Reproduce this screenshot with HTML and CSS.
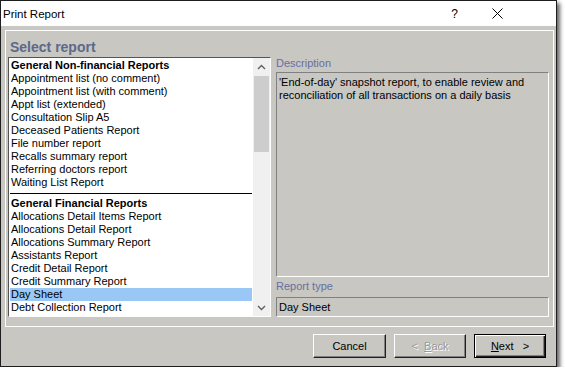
FILE: index.html
```html
<!doctype html>
<html lang="en">
<head>
    <meta charset="UTF-8">
    <title>Print Report</title>
    <link rel="stylesheet" href="styles.css">
</head>
<body>

<div class="window">
    <div class="titlebar">
        <span class="title">Print Report</span>
        <span class="tb-btn">?</span>
        <span class="tb-btn">
            <svg width="11" height="11" viewBox="0 0 11 11"><path d="M0.5 0.5 L10.5 10.5 M10.5 0.5 L0.5 10.5" stroke="#000" stroke-width="1" fill="none"/></svg>
        </span>
    </div>

    <div class="body">
        <div class="group">
            <h2 class="group-title">Select report</h2>
            <div class="group-row">
                <div class="listbox">
                    <ul class="list">
                        <li class="head">General Non-financial Reports</li>
                        <li>Appointment list (no comment)</li>
                        <li>Appointment list (with comment)</li>
                        <li>Appt list (extended)</li>
                        <li>Consultation Slip A5</li>
                        <li>Deceased Patients Report</li>
                        <li>File number report</li>
                        <li>Recalls summary report</li>
                        <li>Referring doctors report</li>
                        <li>Waiting List Report</li>
                        <li class="sep"></li>
                        <li class="head">General Financial Reports</li>
                        <li>Allocations Detail Items Report</li>
                        <li>Allocations Detail Report</li>
                        <li>Allocations Summary Report</li>
                        <li>Assistants Report</li>
                        <li>Credit Detail Report</li>
                        <li>Credit Summary Report</li>
                        <li class="selected">Day Sheet</li>
                        <li>Debt Collection Report</li>
                        <li>Debtors Age Analysis</li>
                    </ul>
                    <div class="scrollbar">
                        <span class="arrow">
                            <svg width="9" height="6" viewBox="0 0 9 6"><path d="M1 5 L4.5 1.5 L8 5" stroke="#606060" stroke-width="1.4" fill="none"/></svg>
                        </span>
                        <span class="track"><span class="thumb"></span></span>
                        <span class="arrow">
                            <svg width="9" height="6" viewBox="0 0 9 6"><path d="M1 1 L4.5 4.5 L8 1" stroke="#606060" stroke-width="1.4" fill="none"/></svg>
                        </span>
                    </div>
                </div>

                <div class="details">
                    <div class="field-label">Description</div>
                    <div class="field desc">'End-of-day' snapshot report, to enable review and reconciliation of all transactions on a daily basis</div>
                    <div class="field-label type-label">Report type</div>
                    <div class="field type">Day Sheet</div>
                </div>
            </div>
        </div>

        <div class="footer">
            <button class="btn">Cancel</button>
            <button class="btn" disabled>&lt;&nbsp; <u>B</u>ack</button>
            <button class="btn default"><u>N</u>ext&nbsp;&nbsp; &gt;</button>
        </div>
    </div>
</div>

</body>
</html>
```

FILE: styles.css
```css
* {
    margin: 0;
    padding: 0;
    list-style: none;
    box-sizing: border-box;
}
body {
    background: #fff;
    font-family: "Liberation Sans", Arial, sans-serif;
    font-size: 11px;
    color: #000;
}
.window {
    width: 557px;
    height: 367px;
    border: 1px solid #1e1e1e;
    background: #c8c7c2;
    display: flex;
    flex-direction: column;
    box-shadow: 3px 3px 4px rgba(0,0,0,0.6);
}
/* title bar */
.titlebar {
    height: 25px;
    background: #fff;
    display: flex;
    align-items: center;
    padding-right: 37px;
}
.titlebar .title {
    flex: 1;
    padding-left: 2px;
    font-size: 11.5px;
}
.tb-btn {
    width: 43px;
    display: flex;
    justify-content: center;
    align-items: center;
    font-size: 12px;
}
/* main area */
.body {
    flex: 1;
    padding: 4px 2px 0 4px;
    display: flex;
    flex-direction: column;
}
.group {
    height: 297px;
    border: 1px solid #fff;
    padding: 8px 4px 0 2px;
}
.group-title {
    font-size: 14px;
    font-weight: bold;
    line-height: 16px;
    color: #5c6989;
    padding-left: 2px;
    margin-bottom: 2px;
}
.group-row {
    display: flex;
    align-items: flex-start;
    gap: 5px;
}
/* list box */
.listbox {
    width: 263px;
    height: 260px;
    display: flex;
    background: #fff;
    border: 1px solid;
    border-color: #555 #fff #fff #555;
}
.list {
    flex: 1;
    padding-top: 1px;
    overflow: hidden;
}
.list li {
    height: 13px;
    line-height: 13px;
    margin: 0 1px;
    padding-left: 1px;
    white-space: nowrap;
}
.list li.head {
    font-weight: bold;
}
.list li.sep {
    padding: 0;
    border-top: 1px solid #000;
    margin-top: 4px;
    height: 4px;
}
.list li.selected {
    background: #99c8f6;
}
.scrollbar {
    width: 17px;
    background: #f0f0f0;
    display: flex;
    flex-direction: column;
}
.scrollbar .arrow {
    height: 17px;
    display: flex;
    justify-content: center;
    align-items: center;
}
.scrollbar .track {
    flex: 1;
    padding: 1px 1px 0;
}
.scrollbar .thumb {
    display: block;
    height: 76px;
    background: #cdcdcd;
}
/* description side */
.details {
    flex: 1;
    display: flex;
    flex-direction: column;
}
.field-label {
    line-height: 13px;
    color: #6670a0;
    margin-bottom: 2px;
}
.type-label {
    margin-top: 3px;
    margin-bottom: 4px;
}
.field {
    border: 1px solid;
    border-color: #808080 #fff #fff #808080;
    padding-left: 2px;
}
.desc {
    height: 205px;
    padding-top: 3px;
    line-height: 13px;
}
.type {
    height: 20px;
    line-height: 18px;
}
/* buttons */
.footer {
    display: flex;
    justify-content: flex-end;
    gap: 8px;
    padding: 7px 8px 0 0;
}
.btn {
    width: 72px;
    height: 24px;
    font-family: "Liberation Sans", Arial, sans-serif;
    font-size: 11px;
    background: #c8c7c2;
    border: 1px solid;
    border-color: #fff #202020 #202020 #fff;
    box-shadow: inset -1px -1px 0 #808080;
}
.btn:first-child {
    width: 73px;
}
.btn:disabled {
    color: #9a9a9a;
    text-shadow: 1px 1px 0 #fff;
}
.btn.default {
    border: 1px solid #000;
    box-shadow: inset 1px 1px 0 #fff, inset -1px -1px 0 #202020, inset -2px -2px 0 #808080;
}
```
